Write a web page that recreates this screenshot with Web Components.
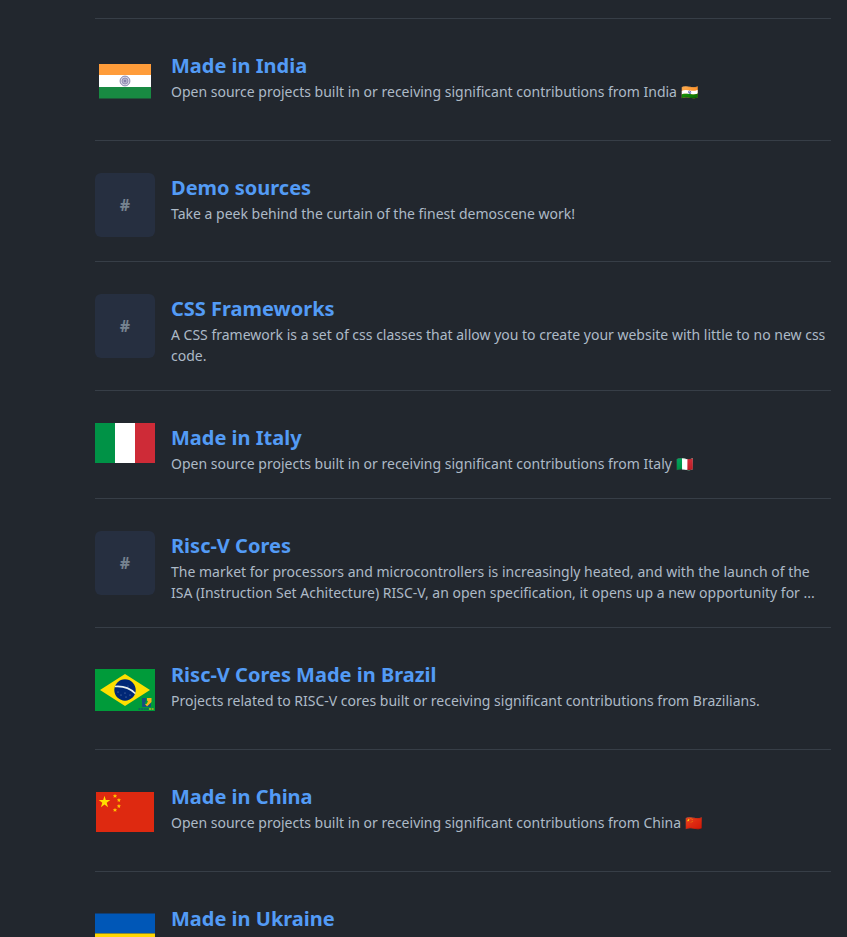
<!DOCTYPE html>
<html lang="en">
<head>
<meta charset="utf-8">
<title>Collections</title>
<style>
html{scrollbar-width:none;background:#22272e}
body{margin:0;color:#adbac7;font:14px/21px "Noto Sans","Liberation Sans",sans-serif}
</style>
</head>
<body>
<template id="list-t">
<style>:host{display:block;padding:18px 16px 0 95px}</style>
<main><slot></slot></main>
</template>
<template id="row-t">
<style>
:host{display:block;border-top:1px solid #373e47}
article{display:flex;align-items:flex-start;gap:16px;padding:32px 0 24px}
.media{width:60px;flex:none}
.text{flex:1;min-width:0}
h2{margin:0;font-size:20px;line-height:30px;font-weight:700}
a{color:#539bf5;text-decoration:none}
a:hover{text-decoration:underline}
p{margin:0}
</style>
<article><div class="media"><slot name="media"></slot></div><div class="text"><h2><a href="#"></a></h2><p><slot></slot></p></div></article>
</template>
<template id="hash-t">
<style>
:host{display:grid;place-items:center;height:64px;border-radius:6px;background:#262f40;color:#768390;font-size:16px;line-height:24px;font-weight:700}
</style>
<span>#</span>
</template>
<template id="flag-t">
<style>
:host{display:block}
:host(:not([kind=italy])){padding-bottom:5px}
svg{display:block;width:100%;height:auto}
</style>
</template>

<template id="india"><svg viewBox="0 0 60 60" role="img" aria-label="Flag of India"><path fill="#ff9c3a" d="M4 13h52v12H4z"/><path fill="#fff" d="M4 24h52v12H4z"/><path fill="#188a42" d="M4 36h52v11.500H4z"/><circle cx="30" cy="30" r="4.900" fill="#dcdbe8" stroke="#8987ad" stroke-width="1"/><circle cx="30" cy="30" r="3" fill="#b4b2cc" stroke="#8987ad" stroke-width=".8"/><circle cx="30" cy="30" r="1.200" fill="#8583aa"/></svg></template>
<template id="italy"><svg viewBox="0 0 60 40" role="img" aria-label="Flag of Italy"><path fill="#009246" d="M0 0h20v40H0z"/><path fill="#fff" d="M20 0h20v40H20z"/><path fill="#ce2b37" d="M40 0h20v40H40z"/></svg></template>
<template id="brazil"><svg viewBox="0 0 60 60" role="img" aria-label="Flag of Brazil"><path fill="#009b3a" d="M0 9h60v42H0z"/><path fill="#fedf00" d="M30 14l25 16-25 16L5 30z"/><circle cx="30" cy="30" r="10.700" fill="#002776"/><path fill="none" stroke="#e5eef0" stroke-width="1.700" d="M20 26.500c8-.7 15.300 2 20.300 7"/><g fill="#8ea5c4"><circle cx="23" cy="32" r=".5"/><circle cx="26" cy="35" r=".5"/><circle cx="30" cy="33" r=".5"/><circle cx="31" cy="37" r=".5"/><circle cx="35" cy="35" r=".5"/><circle cx="33" cy="26" r=".4"/></g><path fill="#17507e" d="M47 38h4v4h-1v2h2l4 3h-9z"/><path fill="#17507e" d="M53 46l3-4v5z"/><path fill="#f7b718" d="M52 38h4.500v4L52 46.500l-2-2.500h1.500l1.500-2.500-1-1z"/><path fill="none" stroke="#125b68" stroke-width="1.700" stroke-dasharray="2 .6" d="M43.500 49H54"/><path fill="none" stroke="#b4b820" stroke-width="1.700" stroke-dasharray="2 .6" d="M54 49h5"/></svg></template>
<template id="china"><svg viewBox="0 0 60 60" role="img" aria-label="Flag of China"><path fill="#de2910" d="M1 10h58v40H1z"/><path fill="#ffde00" d="M9.500 13.800l1.300 4.300h4.500l-3.600 2.700 1.400 4.400-3.600-2.700-3.600 2.700 1.400-4.400-3.600-2.700h4.500z"/><g fill="#ffc400"><path d="M20 12l.7 1.200 1.400.1-1 1 .3 1.500-1.400-.7-1.400.7.300-1.500-1-1 1.400-.1z"/><path d="M24 16l.5 1.300 1.400.2-1 1 .2 1.400-1.300-.7-1.200.6.300-1.400-1-1 1.400-.2z"/><path d="M24 22l.5 1.300 1.400.2-1 1 .2 1.400-1.300-.7-1.200.6.300-1.400-1-1 1.400-.2z"/><path d="M20 26l.7 1.200 1.400.1-1 1 .3 1.500-1.400-.7-1.400.7.300-1.500-1-1 1.400-.1z"/></g></svg></template>
<template id="ukraine"><svg viewBox="0 0 60 60" role="img" aria-label="Flag of Ukraine"><path fill="#0057b7" d="M0 9.600h60v20H0z"/><path fill="#ffd700" d="M0 29.600h60v20H0z"/></svg></template>

<collection-list>
<collection-row heading="Made in India"><flag-icon slot="media" kind="india"></flag-icon>Open source projects built in or receiving significant contributions from India 🇮🇳</collection-row>
<collection-row heading="Demo sources"><hash-tile slot="media"></hash-tile>Take a peek behind the curtain of the finest demoscene work!</collection-row>
<collection-row heading="CSS Frameworks"><hash-tile slot="media"></hash-tile>A CSS framework is a set of css classes that allow you to create your website with little to no new css code.</collection-row>
<collection-row heading="Made in Italy"><flag-icon slot="media" kind="italy"></flag-icon>Open source projects built in or receiving significant contributions from Italy 🇮🇹</collection-row>
<collection-row heading="Risc-V Cores"><hash-tile slot="media"></hash-tile>The market for processors and microcontrollers is increasingly heated, and with the launch of the ISA (Instruction Set Achitecture) RISC-V, an open specification, it opens up a new opportunity for ...</collection-row>
<collection-row heading="Risc-V Cores Made in Brazil"><flag-icon slot="media" kind="brazil"></flag-icon>Projects related to RISC-V cores built or receiving significant contributions from Brazilians.</collection-row>
<collection-row heading="Made in China"><flag-icon slot="media" kind="china"></flag-icon>Open source projects built in or receiving significant contributions from China 🇨🇳</collection-row>
<collection-row heading="Made in Ukraine"><flag-icon slot="media" kind="ukraine"></flag-icon></collection-row>
</collection-list>
<script>
const clone = id => document.getElementById(id).content.cloneNode(true);
class CollectionList extends HTMLElement {
  constructor() { super(); this.attachShadow({mode: 'open'}).append(clone('list-t')); }
}
class CollectionRow extends HTMLElement {
  constructor() {
    super();
    this.attachShadow({mode: 'open'}).append(clone('row-t'));
    this.shadowRoot.querySelector('a').textContent = this.getAttribute('heading');
  }
}
class HashTile extends HTMLElement {
  constructor() { super(); this.attachShadow({mode: 'open'}).append(clone('hash-t')); }
}
class FlagIcon extends HTMLElement {
  constructor() {
    super();
    this.attachShadow({mode: 'open'}).append(clone('flag-t'), clone(this.getAttribute('kind')));
  }
}
customElements.define('collection-list', CollectionList);
customElements.define('collection-row', CollectionRow);
customElements.define('hash-tile', HashTile);
customElements.define('flag-icon', FlagIcon);
</script>
</body>
</html>
